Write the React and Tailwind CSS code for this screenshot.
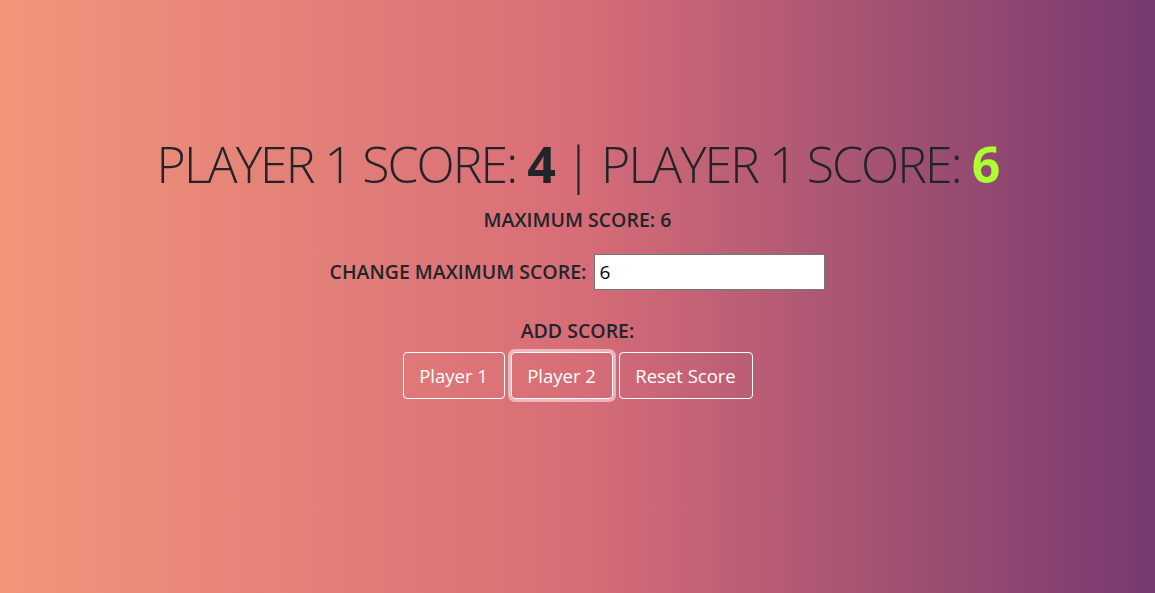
export default function App() {
  return (
    <div className="min-h-screen w-full bg-[linear-gradient(to_right,#f1957a,#d76d77_50%,#763a6f)] font-['Open_Sans',sans-serif] text-[#212529]">
      <div className="flex flex-col items-center pt-[134px]">
        <h1 className="h-[60px] text-[50px] font-light leading-[60px] tracking-[-1.95px]">
          PLAYER 1 SCORE: <span className="font-bold">4</span> | PLAYER 1 SCORE:{' '}
          <span className="font-bold text-[#adff2f]">6</span>
        </h1>
        <p className="mt-[12px] text-[19.5px] font-semibold leading-[27px]">MAXIMUM SCORE: 6</p>
        <div className="mt-[21px] flex items-center gap-[8px]">
          <label className="text-[19.5px] font-semibold">CHANGE MAXIMUM SCORE:</label>
          <input
            type="number"
            defaultValue={6}
            className="h-[36px] w-[231px] border border-[#767676] bg-white px-[4px] text-[19px] text-black outline-none"
          />
        </div>
        <p className="mt-[27px] text-[19.5px] font-semibold leading-[27px]">ADD SCORE:</p>
        <div className="mt-[8px] flex gap-[6px]">
          <button className="h-[47px] w-[102px] rounded-[4px] border border-white text-[18.5px] text-white">Player 1</button>
          <button className="h-[47px] w-[102px] rounded-[4px] border border-white text-[18.5px] text-white ring-[3px] ring-white/50">Player 2</button>
          <button className="h-[47px] w-[134px] rounded-[4px] border border-white text-[18.5px] text-white">Reset Score</button>
        </div>
      </div>
    </div>
  )
}
